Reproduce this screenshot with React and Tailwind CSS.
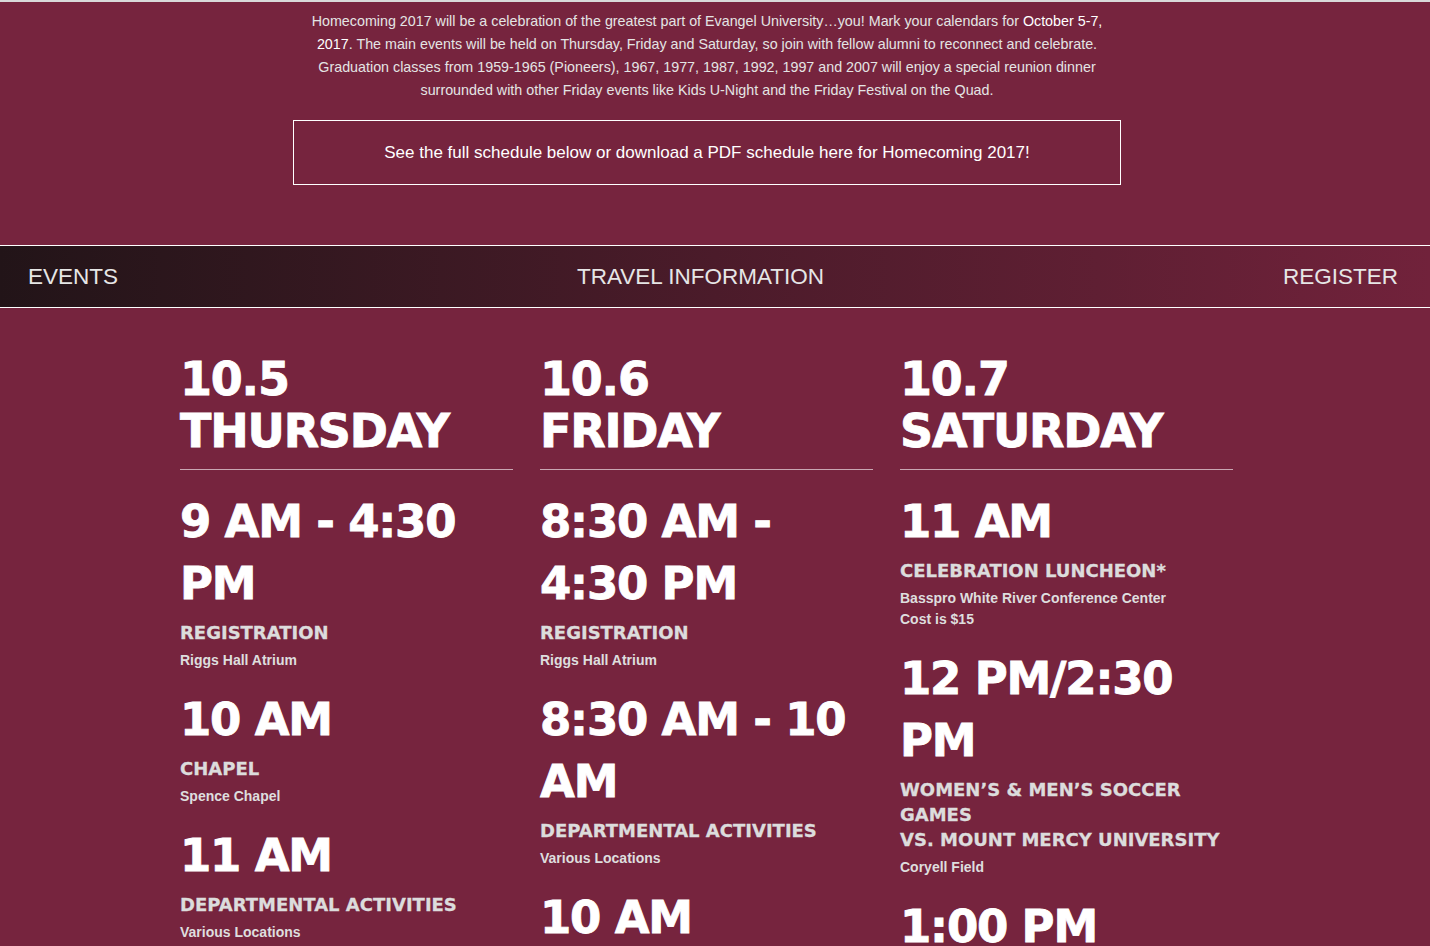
import React from "react";

const days = [
  {
    date: "10.5",
    day: "THURSDAY",
    events: [
      { time: "9 AM - 4:30 PM", title: ["REGISTRATION"], place: ["Riggs Hall Atrium"] },
      { time: "10 AM", title: ["CHAPEL"], place: ["Spence Chapel"] },
      { time: "11 AM", title: ["DEPARTMENTAL ACTIVITIES"], place: ["Various Locations"] },
    ],
  },
  {
    date: "10.6",
    day: "FRIDAY",
    events: [
      { time: "8:30 AM - 4:30 PM", title: ["REGISTRATION"], place: ["Riggs Hall Atrium"] },
      { time: "8:30 AM - 10 AM", title: ["DEPARTMENTAL ACTIVITIES"], place: ["Various Locations"] },
      { time: "10 AM", title: ["CHAPEL"], place: ["Spence Chapel"] },
    ],
  },
  {
    date: "10.7",
    day: "SATURDAY",
    events: [
      {
        time: "11 AM",
        title: ["CELEBRATION LUNCHEON*"],
        place: ["Basspro White River Conference Center", "Cost is $15"],
      },
      {
        time: "12 PM/2:30 PM",
        title: ["WOMEN\u2019S & MEN\u2019S SOCCER GAMES", "VS. MOUNT MERCY UNIVERSITY"],
        place: ["Coryell Field"],
      },
      { time: "1:00 PM", title: ["FAMILY PICNIC"], place: ["The Quad"] },
    ],
  },
];

const heavy = { fontFamily: '"DejaVu Sans", "Liberation Sans", sans-serif' };

const Event = ({ ev }) => (
  <div className="mb-[18px]">
    <h3
      style={heavy}
      className="text-[45px] leading-[62px] font-bold tracking-[-1.2px] text-white mb-[5px] [-webkit-text-stroke:0.8px_white]"
    >
      {ev.time}
    </h3>
    {ev.title.map((t) => (
      <h4
        key={t}
        style={heavy}
        className="text-[18px] leading-[25px] font-bold text-[#dcdcdc] [-webkit-text-stroke:0.3px_#dcdcdc]"
      >
        {t}
      </h4>
    ))}
    <div className="mt-[5px] font-['Liberation_Sans',Arial,sans-serif] text-[14px] leading-[21px] font-bold text-[#dedede]">
      {ev.place.map((p) => (
        <p key={p}>{p}</p>
      ))}
    </div>
  </div>
);

export default function App() {
  return (
    <div className="h-[946px] overflow-hidden bg-[#76243e] font-['Liberation_Sans',Arial,sans-serif]">
      <div className="h-[2px] bg-[#d9d9d9]" />

      {/* intro */}
      <div className="w-[828px] ml-[293px] pt-[8px]">
        <p className="w-[810px] mx-auto text-[14.3px] leading-[23px] text-center text-[#e4e4e4]">
          Homecoming 2017 will be a celebration of the greatest part of Evangel University…you! Mark your
          calendars for <span className="text-white">October 5-7, 2017</span>. The main events will be held on
          Thursday, Friday and Saturday, so join with fellow alumni to reconnect and celebrate. Graduation
          classes from 1959-1965 (Pioneers), 1967, 1977, 1987, 1992, 1997 and 2007 will enjoy a special reunion
          dinner surrounded with other Friday events like Kids U-Night and the Friday Festival on the Quad.
        </p>
        <a
          href="#"
          className="mt-[18px] h-[65px] border border-white flex items-center justify-center text-[17px] text-white"
        >
          See the full schedule below or download a PDF schedule here for Homecoming 2017!
        </a>
      </div>

      {/* nav */}
      <nav className="mt-[60px] h-[63px] border-y border-white bg-gradient-to-r from-[#221418] via-[#4b1b2a] to-[#71223b] flex items-center justify-between pl-[28px] pr-[32px] text-[22.5px] text-[#e6e6e6]">
        <span>EVENTS</span>
        <span>TRAVEL INFORMATION</span>
        <span>REGISTER</span>
      </nav>

      {/* schedule */}
      <div className="ml-[180px] w-[1053px] pt-[45px] grid grid-cols-3 gap-x-[27px] items-start">
        {days.map((d) => (
          <div key={d.date}>
            <h2
              style={heavy}
              className="text-[46px] leading-[52px] font-bold tracking-[-1.2px] text-white pb-[12px] border-b border-[#c8a7b2] [-webkit-text-stroke:0.8px_white]"
            >
              <span className="block">{d.date}</span>
              <span className="block">{d.day}</span>
            </h2>
            <div className="mt-[21px]">
              {d.events.map((ev) => (
                <Event key={ev.time} ev={ev} />
              ))}
            </div>
          </div>
        ))}
      </div>
    </div>
  );
}
